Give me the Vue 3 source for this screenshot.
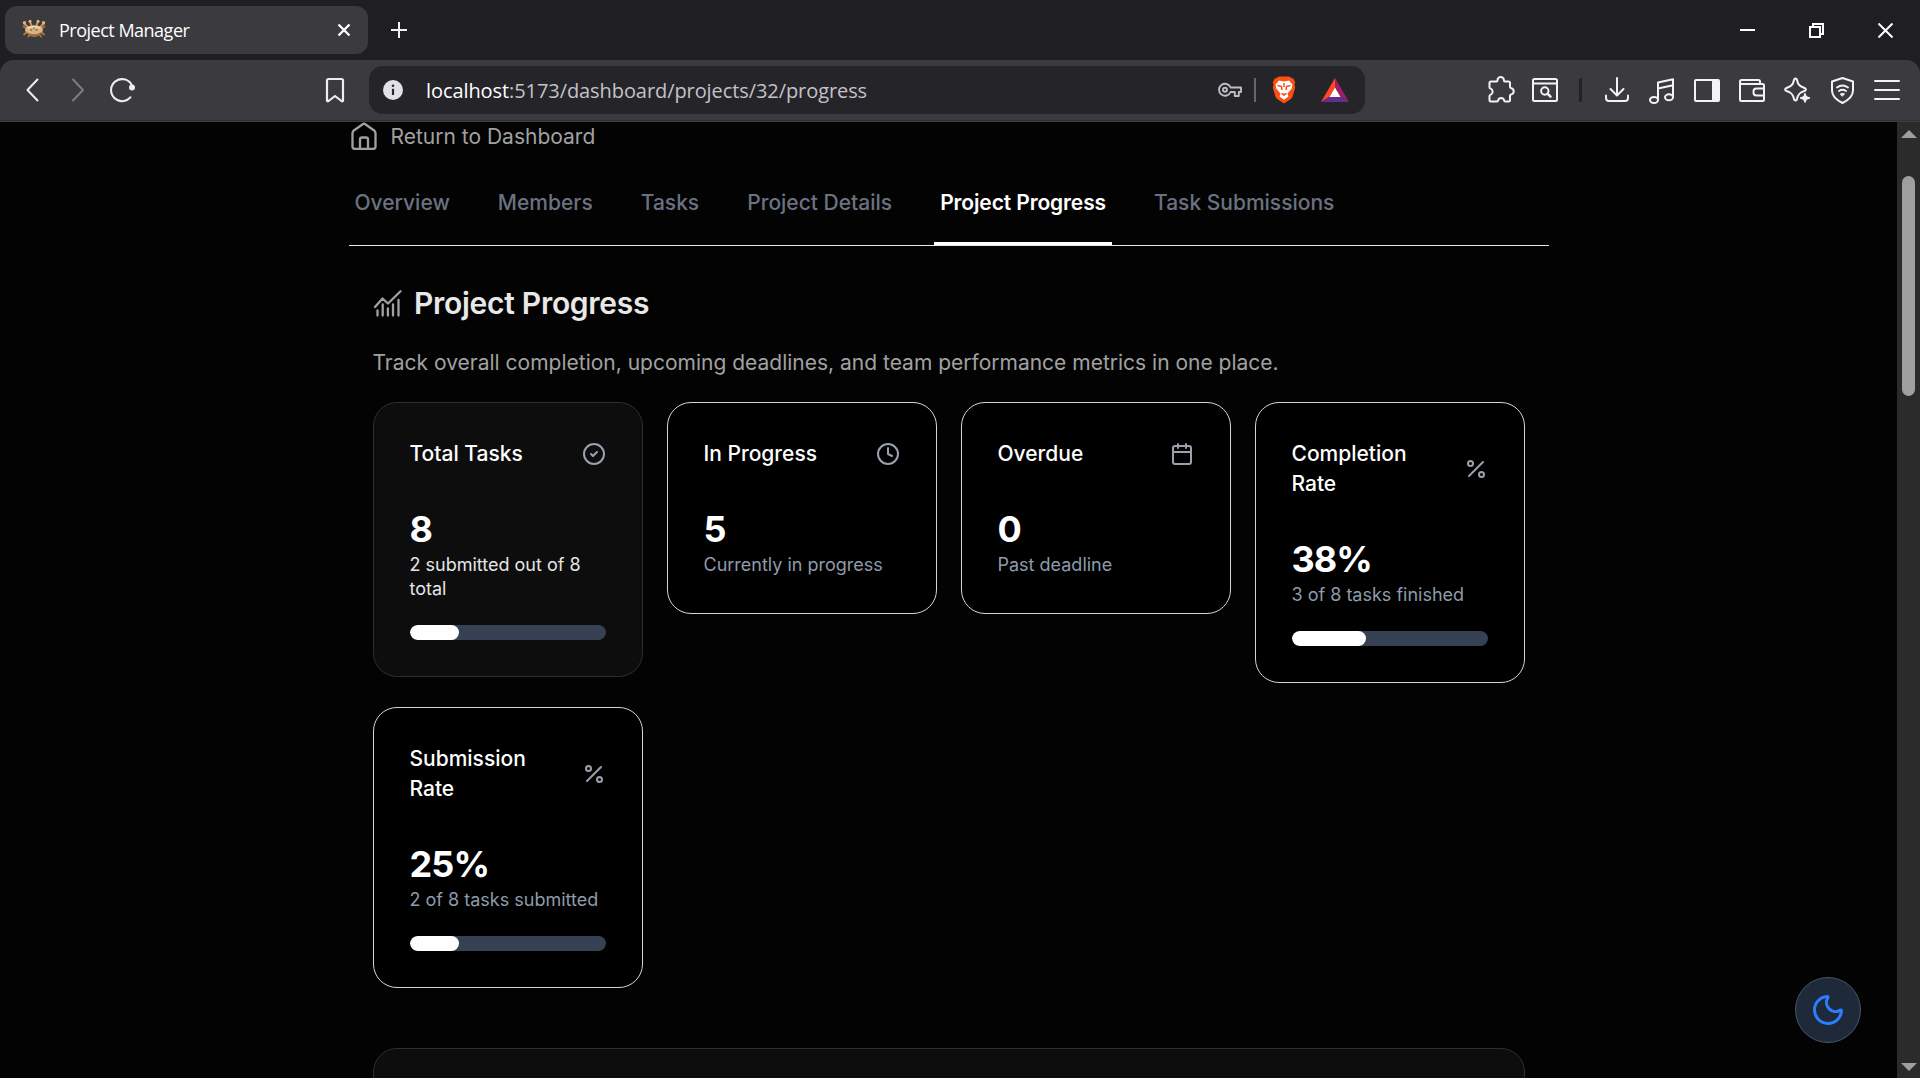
<script setup>
const tabs = ['Overview', 'Members', 'Tasks', 'Project Details', 'Project Progress', 'Task Submissions']
const activeTab = 'Project Progress'

const cards = [
  { title: 'Total Tasks', icon: 'check', value: '8', note: '2 submitted out of 8 total', progress: 25, muted: true },
  { title: 'In Progress', icon: 'clock', value: '5', note: 'Currently in progress' },
  { title: 'Overdue', icon: 'calendar', value: '0', note: 'Past deadline' },
  { title: 'Completion Rate', icon: 'percent', value: '38%', note: '3 of 8 tasks finished', progress: 38 },
  { title: 'Submission Rate', icon: 'percent', value: '25%', note: '2 of 8 tasks submitted', progress: 25 },
]
</script>

<template>
  <div class="window">
    <header class="tabstrip">
      <div class="browser-tab">
        <svg class="favicon" width="24" height="20" viewBox="0 0 24 20">
          <g stroke="#a87c48" stroke-width="1.800" stroke-linecap="round" fill="none">
            <path d="M5 9.500 1.500 7.500M19 9.500l3.500-2M5 13l-3 2.500M7.500 15.500l-1 2M19 13l3 2.500M17 15l2 2.500" />
            <path d="M6 8 2 4.500M18 8l4-3.500M9.500 6 8 3M14.500 6 16 3" stroke="#c79d64" />
          </g>
          <ellipse cx="12" cy="11" rx="9" ry="4.800" fill="#dcb479" />
          <path d="M4.500 13q7.500 4.500 15 0-2.500 5-7.500 5t-7.500-5" fill="#96703f" />
          <path d="M5.500 9.500q6.500-4 13 0" stroke="#f3d9ab" stroke-width="1.300" fill="none" />
          <path d="M8.500 10.500l1.500 1M15.500 10.500l-1.500 1" stroke="#6b5c4b" stroke-width="1.500" />
          <path d="M11 8.500h2v2h-2z" fill="#8d939b" />
          <circle cx="2.500" cy="3.800" r="1.700" fill="#dcb479" /><circle cx="21.500" cy="3.800" r="1.700" fill="#dcb479" />
          <circle cx="8" cy="2.300" r="1.500" fill="#dcb479" /><circle cx="16" cy="2.300" r="1.500" fill="#dcb479" />
        </svg>
        <span class="tab-title">Project Manager</span>
        <svg width="14" height="14" viewBox="0 0 14 14" stroke="#fff" stroke-width="2.300"><path d="M1.500 1.500l11 11M12.500 1.500l-11 11" /></svg>
      </div>
      <svg class="new-tab" width="16" height="16" viewBox="0 0 16 16" stroke="#f1f1f3" stroke-width="2"><path d="M0 8h16M8 0v16" /></svg>
      <div class="window-controls">
        <svg width="15" height="15" viewBox="0 0 15 15" fill="#fff"><path d="M0 6h15v2H0z" /></svg>
        <svg width="15" height="15" viewBox="0 0 15 15" fill="none" stroke="#fff" stroke-width="2"><path d="M1 4h10v10H1zM4 4V1h10v10h-3" /></svg>
        <svg width="15" height="15" viewBox="0 0 15 15" stroke="#fff" stroke-width="2"><path d="M.500.500l14 14M14.500.500l-14 14" /></svg>
      </div>
    </header>

    <div class="toolbar">
      <div class="nav-buttons">
        <svg width="28" height="28" viewBox="0 0 28 28"><path d="M18.500 3.500 8.500 14l10 10.500" /></svg>
        <svg class="disabled" width="28" height="28" viewBox="0 0 28 28"><path d="M10 3.500 20 14 10 24.500" /></svg>
        <svg width="28" height="28" viewBox="0 0 28 28"><path d="M23.500 21.200A11 11 0 1 1 24.500 8.500" /><circle cx="25" cy="11.500" r="3" fill="#eeeef0" stroke="none" /></svg>
      </div>
      <svg class="bookmark" width="20" height="26" viewBox="0 0 20 26"><path d="M3.500 2h13q1.500 0 1.500 1.500v20.200q-.500 1-1.500.300L10 19l-6.500 5q-1 .700-1.500-.300V3.500Q2 2 3.500 2z" /></svg>
      <div class="address">
        <svg width="20" height="20" viewBox="0 0 20 20"><circle cx="10" cy="10" r="10" fill="#e2e1e8" /><path d="M10 8.800V15" stroke="#29282e" stroke-width="2.200" /><circle cx="10" cy="5.800" r="1.300" fill="#29282e" /></svg>
        <div class="url"><span>localhost</span>:5173/dashboard/projects/32/progress</div>
        <div class="address-icons">
          <svg class="key" width="24" height="16" viewBox="0 0 24 16"><path d="M12.600 5.500a6 6 0 1 0 0 4.500h4.200v4h4V10h2.200V5.500z" stroke-linejoin="round" /><circle cx="7" cy="7.800" r="2" /></svg>
          <i class="address-rule"></i>
          <svg class="shields" width="24" height="28" viewBox="0 0 24 28">
            <path d="M4.500 2 7 .500h10L19.500 2l2 .800 1.700 3.400-.700 2.400.700 3-2.700 9.200q-.500 1.400-2 2.400L12 27.500l-6.500-4.300q-1.500-1-2-2.400L.800 11.600l.700-3-.700-2.400 1.700-3.400z" fill="#fb5012" />
            <path d="M7 4.500l5 1 5-1 3.500 4.200-.800 3.800-4.200 5 1 3L12 23.800 7.500 20.500l1-3-4.200-5-.800-3.800z" fill="#fff" />
            <path class="face" d="M5.500 9.500l4 1 .500 3.500M18.500 9.500l-4 1L14 14M12 7v4M9.500 17.500l2.500 1 2.500-1M12 18v2" />
          </svg>
          <svg width="28" height="24" viewBox="0 0 28 24"><path d="M14 0 0 24l9-5.500 5-9z" fill="#ff4724" /><path d="M14 0l14 24-9-5.500-5-9z" fill="#9e1f63" /><path d="M0 24h28l-8.500-5.500h-11z" fill="#662d91" /><path d="M14 9.500 8.500 19h11z" fill="#fff" /></svg>
        </div>
      </div>
      <div class="extensions">
        <svg width="28" height="28" viewBox="0 0 28 28"><path d="M4 5.500h5.500c.800 0 1-.500 1-1.300a3.200 3.200 0 0 1 6.400 0c0 .800.300 1.300 1.100 1.300h3.500q1.500 0 1.500 1.500v4c0 .800.500 1 1.300 1.200a3.200 3.200 0 0 1 0 6.200c-.800.200-1.300.600-1.300 1.400V24q0 1.500-1.500 1.500h-3.300c-.600 0-1-.500-1.100-1.200a3.100 3.100 0 0 0-6 0c-.100.700-.500 1.200-1.100 1.200H4q-1.500 0-1.500-1.500v-4c0-.700.500-1 1.200-1.300a3.300 3.300 0 0 0 0-6c-.700-.300-1.200-.600-1.200-1.300V7Q2.500 5.500 4 5.500z" /></svg>
        <svg width="28" height="28" viewBox="0 0 28 28"><rect x="1" y="3" width="24" height="22" rx="1.500" /><path d="M1 7.500h24" /><circle cx="12.800" cy="15" r="3.700" /><path d="M15.500 17.700l3 3" stroke-width="2.500" /></svg>
        <i class="toolbar-rule"></i>
        <svg width="28" height="28" viewBox="0 0 28 28"><path d="M14 2v17M7.500 13l6.500 6.500 6.500-6.500M3 19.500V22q0 3 3 3h16q3 0 3-3v-2.500" /></svg>
        <svg width="28" height="28" viewBox="0 0 28 28"><path d="M10 24V6.500L25 3.300v17.500M10 12.500 25 9.200" /><ellipse cx="6" cy="24" rx="4" ry="3" /><ellipse cx="21" cy="21.300" rx="4" ry="3" /></svg>
        <svg width="28" height="28" viewBox="0 0 28 28"><rect x="2" y="4" width="24" height="21" rx="1" /><path d="M19 4h7v21h-7z" fill="#f3f3f5" stroke="none" /></svg>
        <svg width="28" height="28" viewBox="0 0 28 28"><path d="M22 8V5.500Q22 4 20.500 4H3.500Q2 4 2 5.500v18Q2 25 3.500 25h21q1.500 0 1.500-1.500v-14Q26 8 24.500 8H4Q2 8 2 6M26 12.500h-7.500q-3 0-3 3v1q0 3 3 3H26" /></svg>
        <svg width="28" height="28" viewBox="0 0 28 28"><path d="M12.500 2.500q1.200 0 1.500 1.500c1 5 3 6.500 7.500 8 1.800.700 1.800 2.300 0 3-4.500 1.300-6.500 3-7.500 8-.300 2-2.700 2-3 0-1-5-3-6.700-7.500-8-1.800-.700-1.800-2.300 0-3 4.500-1.500 6.500-3 7.500-8q.300-1.500 1.500-1.500z" /><path d="M22 17.500l1.400 3.100 3.600 1.400-3.600 1.400L22 26.500l-1.400-3.100L17 22l3.600-1.400z" fill="#f3f3f5" stroke="#f3f3f5" stroke-width="1" /></svg>
        <svg width="28" height="28" viewBox="0 0 28 28"><path d="M14.500 2 25 5.500v9c0 5.500-4.500 9.500-10.500 12.500C8.500 24 4 20 4 14.500v-9z" /><path d="M9 11.500q5.500-4 11 0M11 15q3.500-2.500 7 0" /><path d="M12.500 18q2-1.500 4 0l-2 2z" fill="#f3f3f5" stroke-width="1" /></svg>
        <svg width="28" height="28" viewBox="0 0 28 28"><path d="M2 5h24M2 14h24M2 23h24" /></svg>
      </div>
    </div>

    <div class="viewport">
      <main class="page">
        <div class="return-link">
          <svg width="28" height="30" viewBox="0 0 28 30"><path d="M2.500 11q0-1.300 1-2.300L12.700 2.200q1.300-1 2.600 0l9.200 6.500q1 1 1 2.300V24.800q0 2-2 2h-19q-2 0-2-2zM10 26.800V17.500q0-2 2-2h4q2 0 2 2v9.300" /></svg>
          <span>Return to Dashboard</span>
        </div>

        <nav class="tabs">
          <a v-for="tab in tabs" :key="tab" class="tab" :class="{ active: tab === activeTab }">{{ tab }}</a>
        </nav>

        <section class="content">
          <h1 class="heading">
            <svg width="29" height="27" viewBox="0 0 29 27"><path d="M2 17 9.500 8.500l5.500 5L27.500 1.300M4.500 25.500v-5M9.700 25.500v-11M14.900 25.500v-7M20 25.500v-11M25.500 25.500V10" /></svg>
            <span>Project Progress</span>
          </h1>
          <p class="lead">Track overall completion, upcoming deadlines, and team performance metrics in one place.</p>

          <div class="cards">
            <article v-for="card in cards" :key="card.title" class="card" :class="{ muted: card.muted }">
              <div class="card-head">
                <h2>{{ card.title }}</h2>
                <svg width="24" height="24" viewBox="0 0 24 24">
                  <template v-if="card.icon === 'check'"><circle cx="12" cy="12" r="10" /><path d="m9 12 2 2 4-4" /></template>
                  <template v-else-if="card.icon === 'clock'"><circle cx="12" cy="12" r="10" /><path d="M12 6v6l4 2" /></template>
                  <template v-else-if="card.icon === 'calendar'"><path d="M8 2v4M16 2v4M3 10h18" /><rect x="3" y="4" width="18" height="18" rx="2" /></template>
                  <template v-else><path d="M19 5 5 19" /><circle cx="6.500" cy="6.500" r="2.500" /><circle cx="17.500" cy="17.500" r="2.500" /></template>
                </svg>
              </div>
              <div class="value">{{ card.value }}</div>
              <p class="note">{{ card.note }}</p>
              <div v-if="card.progress" class="track"><div class="fill" :style="{ width: card.progress + '%' }"></div></div>
            </article>
          </div>

          <div class="panel"></div>
        </section>
      </main>

      <div class="scrollbar">
        <i class="arrow up"></i>
        <i class="thumb"></i>
        <i class="arrow down"></i>
      </div>

      <button class="theme-toggle">
        <svg width="36" height="36" viewBox="0 0 24 24"><path d="M20.985 12.486a9 9 0 1 1-9.473-9.472c.405-.022.617.46.402.803a6 6 0 0 0 8.268 8.268c.344-.215.825-.004.803.401" /></svg>
      </button>
    </div>
  </div>
</template>

<style>
body { margin: 0; background: #030303; overflow: hidden; }
</style>

<style scoped>
* { box-sizing: border-box; }
svg { display: block; flex: none; }
h1, h2, p { margin: 0; }

.window {
  display: flex; flex-direction: column; width: 1920px; height: 1078px; overflow: hidden;
  background: #1f1e23; font-family: Inter, "Liberation Sans", sans-serif;
}

.tabstrip { display: flex; align-items: center; flex: none; height: 60px; padding: 0 27px 0 5px; }
.browser-tab {
  display: flex; align-items: center; width: 363px; height: 48px; padding: 0 17px;
  border-radius: 12px; background: #3b3a3f;
}
.favicon { margin-top: -3px; }
.tab-title {
  flex: 1; margin-left: 13px; padding-bottom: 1px; color: #fff; white-space: nowrap;
  font: 18px/24px "Open Sans", "Noto Sans", sans-serif; letter-spacing: -0.5px;
}
.new-tab { margin-left: 23px; }
.window-controls { display: flex; gap: 54px; margin-left: auto; }

.toolbar {
  display: flex; align-items: center; flex: none; height: 62px; padding: 0 19px 2px 19px;
  border-radius: 14px 14px 0 0; background: #3b3a3f; box-shadow: inset 0 -1px #3d3c41, inset 0 -2px #303034;
}
.toolbar svg { fill: none; stroke: #eeeef0; stroke-width: 2; stroke-linecap: round; stroke-linejoin: round; }
.nav-buttons { display: flex; gap: 16px; }
.toolbar .nav-buttons .disabled { stroke: #7d7c81; }
.toolbar .bookmark { margin-left: 190px; stroke-width: 2.200; }
.address {
  display: flex; align-items: center; width: 996px; height: 48px; margin-left: 24px; padding: 0 16px 0 14px;
  border-radius: 14px; background: #252429;
}
.toolbar .address svg { stroke: none; stroke-linecap: butt; }
.toolbar .address .key { stroke: #bebdc3; stroke-width: 1.900; }
.face { fill: none; stroke: #fb5012; stroke-width: 1.500; }
.url {
  flex: 1; margin-left: 23px; padding-top: 1px; color: #c3c2c8; white-space: nowrap;
  font: 20px/28px "Open Sans", "Noto Sans", sans-serif; letter-spacing: -0.08px;
}
.url span { color: #fff; }
.address-icons { display: flex; align-items: center; }
.address-rule { width: 2px; height: 24px; margin: 0 16px 0 12px; background: #66656b; }
.shields { margin-right: 25px; }
.extensions { display: flex; align-items: center; gap: 17px; margin-left: auto; }
.toolbar .extensions svg { stroke: #f3f3f5; }
.toolbar-rule { width: 3px; height: 24px; margin: 0 4px 0 2px; border-radius: 2px; background: #222126; }

.viewport { position: relative; display: flex; flex: 1; min-height: 0; background: #030303; overflow: hidden; }
.page { width: 1200px; margin: 0 auto; }
.return-link { display: flex; align-items: center; gap: 13px; height: 30px; padding-left: 1px; color: #a1a1a1; font-size: 21px; line-height: 30px; }
.return-link svg { fill: none; stroke: #a1a1a1; stroke-width: 2.300; stroke-linejoin: round; }

.tabs { display: flex; gap: 36px; height: 94px; border-bottom: 1px solid #e5e7eb; }
.tab {
  height: 93px; padding: 36px 6px 0; border-bottom: 3px solid transparent;
  color: #6a7282; font-size: 21px; font-weight: 500; line-height: 30px; white-space: nowrap;
}
.tab.active { border-color: #fff; color: #fff; font-weight: 600; letter-spacing: -0.12px; }

.content { padding: 36px 24px 0; }
.heading { display: flex; align-items: center; gap: 12.500px; height: 42px; color: #e8e8e8; font-size: 30px; font-weight: 600; line-height: 42px; letter-spacing: -0.28px; }
.heading svg { fill: none; stroke: #a1a1a1; stroke-width: 2.300; stroke-linecap: round; stroke-linejoin: round; }
.lead { margin-top: 23px; color: #a1a1a1; font-size: 21px; line-height: 32px; white-space: nowrap; }

.cards { display: grid; grid-template-columns: repeat(4, 270px); align-items: start; gap: 24px; margin-top: 23px; }
.card { padding: 36px; border: 1px solid #d1d5dc; border-radius: 24px; background: #000; }
.card.muted { border-color: #2e2e2e; background: #0d0d0d; }
.card-head { display: flex; align-items: center; justify-content: space-between; gap: 24px; margin-bottom: 36px; }
.card-head h2 { color: #fff; font-size: 21px; font-weight: 500; line-height: 30px; }
.card-head svg { fill: none; stroke: #99a1af; stroke-width: 2; stroke-linecap: round; stroke-linejoin: round; }
.value { color: #fff; font-size: 36px; font-weight: 700; line-height: 48px; letter-spacing: -0.9px; }
.note { color: #8e9bab; font-size: 18px; line-height: 24px; }
.muted .note { color: #e5e5e5; }
.track { height: 15px; margin-top: 24px; border-radius: 8px; background: #364153; overflow: hidden; }
.fill { height: 100%; border-radius: 8px; background: #fff; }
.panel { height: 300px; margin-top: 60px; border: 1px solid #2e2e2e; border-radius: 24px; background: #0d0d0d; }

.scrollbar { display: flex; flex-direction: column; align-items: center; flex: none; width: 23px; padding: 8px 0 7px; background: #2b2b2b; }
.thumb { width: 13px; height: 220px; margin-top: 38px; border-radius: 7px; background: #9f9f9f; }
.arrow { border: 8px solid transparent; }
.arrow.up { border-top: 0; border-bottom-color: #9f9f9f; }
.arrow.down { margin-top: auto; border-bottom: 0; border-top-color: #9f9f9f; }

.theme-toggle {
  position: absolute; right: 59px; bottom: 35px; display: flex; align-items: center; justify-content: center;
  width: 66px; height: 66px; padding: 0; border: 1px solid #4a5565; border-radius: 50%; background: #1e2939;
}
.theme-toggle svg { fill: none; stroke: #2b7fff; stroke-width: 2; stroke-linecap: round; stroke-linejoin: round; }
</style>
